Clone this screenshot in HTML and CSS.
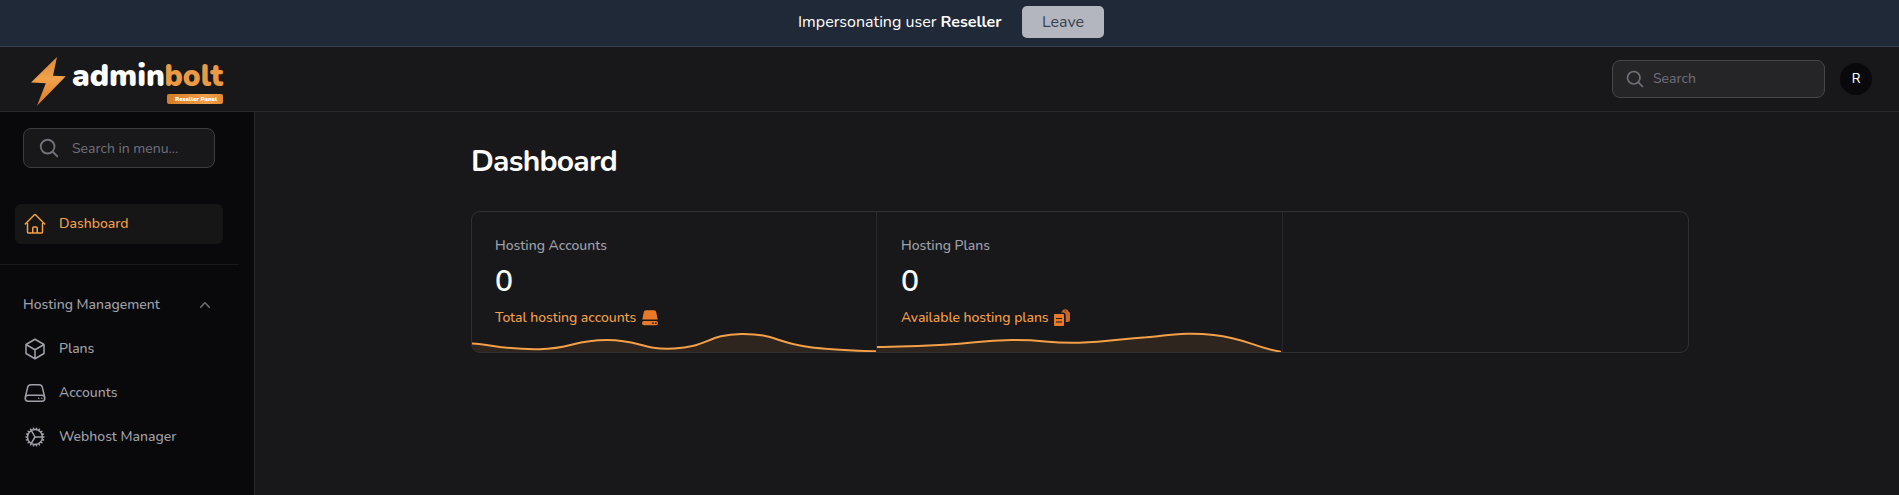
FILE: index.html
```html
<!DOCTYPE html>
<html lang="en">
<head>
<meta charset="utf-8">
<title>Dashboard</title>
<link rel="stylesheet" href="styles.css">
</head>
<body>
<div class="banner"><span class="banner-text">Impersonating user <b>Reseller</b></span><button class="leave">Leave</button></div>
<header class="topbar">
  <svg class="logo" width="200" height="64" viewBox="28 47 200 64">
    <defs>
      <linearGradient id="boltFill" x1="0" y1="0" x2="0" y2="1"><stop offset="0" stop-color="#d98a3a"/><stop offset=".45" stop-color="#f2a24c"/><stop offset="1" stop-color="#d67a20"/></linearGradient>
      <linearGradient id="tagFill" x1="0" y1="0" x2="1" y2="0"><stop offset="0" stop-color="#d67d24"/><stop offset=".7" stop-color="#f2a04a"/><stop offset="1" stop-color="#e28a32"/></linearGradient>
    </defs>
    <path d="M57 57 53 75.8 65.8 76.3 37 105.8 45.800 83.200 31 82.400Z" fill="url(#boltFill)"/>
    <text class="word" x="72" y="85.800" textLength="93" lengthAdjust="spacingAndGlyphs" fill="#fff">admin</text>
    <text class="word" x="164.500" y="85.800" textLength="58.500" lengthAdjust="spacingAndGlyphs" fill="#ea9a45">bolt</text>
    <rect x="167" y="94" width="56" height="10" rx="2" fill="url(#tagFill)"/>
    <text class="tag" x="175" y="101.200" textLength="42" lengthAdjust="spacingAndGlyphs" fill="#fff">Reseller Panel</text>
  </svg>
  <div class="tools">
    <div class="search"><svg class="i20" viewBox="0 0 24 24"><path d="m21 21-5.197-5.197m0 0A7.5 7.5 0 1 0 5.196 5.196a7.5 7.5 0 0 0 10.607 10.607Z"/></svg><span>Search</span></div>
    <div class="avatar">R</div>
  </div>
</header>
<div class="shell">
  <aside class="sidebar">
    <div class="search menu-search"><svg class="i22" viewBox="0 0 24 24"><path d="m21 21-5.197-5.197m0 0A7.5 7.5 0 1 0 5.196 5.196a7.5 7.5 0 0 0 10.607 10.607Z"/></svg><span>Search in menu...</span></div>
    <a class="nav active"><svg class="i24" viewBox="0 0 24 24"><path d="m2.25 12 8.954-8.955c.44-.439 1.152-.439 1.591 0L21.75 12M4.5 9.75v10.125c0 .621.504 1.125 1.125 1.125H9.75v-4.875c0-.621.504-1.125 1.125-1.125h2.25c.621 0 1.125.504 1.125 1.125V21h4.125c.621 0 1.125-.504 1.125-1.125V9.75M8.25 21h8.25"/></svg><span>Dashboard</span></a>
    <div class="rule"></div>
    <div class="group"><span>Hosting Management</span><svg class="chev" viewBox="0 0 20 20"><path d="M14.77 12.79a.75.75 0 0 1-1.06-.02L10 8.832 6.29 12.77a.75.75 0 1 1-1.08-1.04l4.25-4.5a.75.75 0 0 1 1.08 0l4.25 4.5a.75.75 0 0 1-.02 1.06Z"/></svg></div>
    <nav class="items">
      <a class="nav"><svg class="i24" viewBox="0 0 24 24"><path d="m21 7.5-9-5.25L3 7.5m18 0-9 5.25m9-5.25v9l-9 5.25M3 7.5l9 5.25M3 7.5v9l9 5.25m0-9v9"/></svg><span>Plans</span></a>
      <a class="nav"><svg class="i24" viewBox="0 0 24 24"><path d="M21.75 17.25v-.228a4.5 4.5 0 0 0-.12-1.03l-2.268-9.64a3.375 3.375 0 0 0-3.285-2.602H7.923a3.375 3.375 0 0 0-3.285 2.602l-2.268 9.64a4.5 4.5 0 0 0-.12 1.03v.228m19.5 0a3 3 0 0 1-3 3H5.25a3 3 0 0 1-3-3m19.5 0a3 3 0 0 0-3-3H5.25a3 3 0 0 0-3 3m16.5 0h.008v.008h-.008v-.008Zm-3 0h.008v.008h-.008v-.008Z"/></svg><span>Accounts</span></a>
      <a class="nav"><svg class="i24" viewBox="0 0 24 24"><path d="M4.5 12a7.5 7.5 0 0 0 15 0m-15 0a7.5 7.5 0 1 1 15 0m-15 0H3m16.5 0H21m-1.5 0H12m-8.457 3.077 1.41-.513m14.095-5.13 1.41-.513M5.106 17.785l1.15-.964m11.49-9.642 1.149-.964M7.501 19.795l.75-1.3m7.5-12.99.75-1.3m-6.063 16.658.26-1.477m2.605-14.772.26-1.477m0 17.726-.26-1.477M10.698 4.614l-.26-1.477M16.5 19.794l-.75-1.299M7.5 4.205 12 12m6.894 5.785-1.149-.964M6.256 7.178l-1.15-.964m15.352 8.864-1.41-.513M4.954 9.435l-1.41-.514M12.002 12l-3.75 6.495"/></svg><span>Webhost Manager</span></a>
    </nav>
  </aside>
  <main class="main">
    <h1>Dashboard</h1>
    <section class="stats">
      <div class="stat">
        <div class="label">Hosting Accounts</div>
        <div class="value">0</div>
        <div class="desc"><span class="w-total">Total hosting accounts</span><svg viewBox="0 0 20 20"><path d="M6 2.200h8c1.100 0 1.900.7 2.200 1.800l1.500 7.500H2.300L3.800 4C4.100 2.900 4.900 2.200 6 2.200Z"/><path fill-rule="evenodd" d="M4 13h12a2 2 0 0 1 2 2v.2a2 2 0 0 1-2 2H4a2 2 0 0 1-2-2V15a2 2 0 0 1 2-2Zm8.900 1.200a.9.9 0 1 0 0 1.800.9.9 0 0 0 0-1.800Zm2.900 0a.9.9 0 1 0 0 1.800.9.9 0 0 0 0-1.800Z"/></svg></div>
        <svg class="chart" viewBox="0 0 404 20" preserveAspectRatio="none"><path class="area" d="M0 11.5C20 12.5 33.7 17.9 67.3 17.2S101 8.1 134.7 8 168.3 18 202 16.5 235.6 2.4 269.3 2 303 10.6 336.7 15C358 18 380 18.6 404 19.5V20H0Z"/><path class="line" d="M0 11.5C20 12.5 33.7 17.9 67.3 17.2S101 8.1 134.7 8 168.3 18 202 16.5 235.6 2.4 269.3 2 303 10.6 336.7 15C358 18 380 18.6 404 19.3"/></svg>
      </div>
      <div class="stat second">
        <div class="label">Hosting Plans</div>
        <div class="value">0</div>
        <div class="desc"><span class="w-avail">Available hosting plans</span><svg viewBox="0 0 20 20"><path fill-rule="evenodd" d="M3 6h8.2c.5 0 .8.3.8.8v10.400c0 .5-.3.8-.8.8H3c-.6 0-1-.4-1-1V7c0-.6.4-1 1-1Zm1 4v1h6v-1H4Zm0 3.400v1h6v-1H4Z"/><path d="M9 4.500h2c1.600 0 2.700 1 2.700 2.600V14H16a2 2 0 0 0 2-2V5.500c0-1-.7-1.800-1.700-2C16 2 14.900 1.200 13.300 1.200S10.500 2 10.200 3.400C9.700 3.500 9.300 4 9 4.500Zm3.200-1.300c.2-.5.500-.7 1.100-.7s1 .2 1.200.7Z" fill-rule="evenodd" fill-opacity=".85"/></svg></div>
        <svg class="chart" viewBox="0 0 404 20" preserveAspectRatio="none"><path class="area" d="M0 15C22 14.400 33.700 14.400 67.300 12.700S101 8.500 134.700 8 168.300 11.400 202 10.700 235.700 7.300 269.300 5.300C303 2 313 .5 336.700 2.900 370 6.300 376 15.500 404 19.700V20H0Z"/><path class="line" d="M0 15C22 14.400 33.700 14.400 67.300 12.700S101 8.500 134.700 8 168.300 11.400 202 10.700 235.700 7.300 269.300 5.300C303 2 313 .5 336.700 2.900 370 6.300 376 15.500 404 19.700"/></svg>
      </div>
      <div class="stat"></div>
    </section>
  </main>
</div>
</body>
</html>
```
FILE: styles.css
```css
* { box-sizing: border-box; }
body { margin: 0; height: 495px; overflow: hidden; display: flex; flex-direction: column; background: #18181b; color: #fff; font: 500 14px/20px Nunito, Lato, sans-serif; }
svg { display: block; flex: none; }
span, .label { white-space: nowrap; }
.banner { height: 47px; flex: none; background: #1f2937; border-bottom: 1px solid #374151; display: flex; align-items: flex-start; padding: 6px 0 0 798px; gap: 20px; }
.banner-text { font-size: 16px; font-weight: 400; line-height: 32px; width: 204px; }
.leave { width: 82px; height: 32px; border: 0; border-radius: 5px; background: #b3b6be; color: #374151; font: 400 16px/32px Nunito, Lato, sans-serif; padding: 0; }
.topbar { height: 65px; flex: none; border-bottom: 1px solid #2a2a2d; display: flex; justify-content: space-between; padding: 0 27px 0 28px; }
.word { font: 900 32.500px Nunito, Lato, sans-serif; }
.tag { font: 900 6.500px Nunito, Lato, sans-serif; }
.tools { display: flex; align-items: center; gap: 15px; }
.search { width: 213px; height: 38px; border: 1px solid #464649; border-radius: 8px; background: #252528; color: #71717a; display: flex; align-items: center; padding-left: 12px; gap: 8px; font-weight: 400; }
.search svg, .nav svg { fill: none; stroke: currentColor; stroke-width: 1.500; stroke-linecap: round; stroke-linejoin: round; }
.search svg { stroke-width: 2; }
.i20 { width: 20px; height: 20px; }
.i22 { width: 22px; height: 22px; }
.i24 { width: 24px; height: 24px; }
.avatar { width: 32px; height: 32px; border-radius: 50%; background: #09090b; text-align: center; line-height: 32px; font-size: 13px; }
.shell { flex: 1; display: flex; min-height: 0; }
.sidebar { width: 255px; flex: none; background: #09090b; border-right: 1px solid #29292c; padding-top: 16px; color: #a1a1aa; }
.menu-search { width: 192px; height: 40px; margin-left: 23px; background: #18181b; border-color: #3d3d40; padding-left: 14px; gap: 12px; }
.menu-search span { padding-top: 2px; }
.nav { height: 40px; display: flex; align-items: center; gap: 12px; margin-left: 15px; width: 208px; padding-left: 8px; border-radius: 6px; }
.active { margin-top: 36px; background: #161616; color: #f3a048; }
.rule { width: 239px; height: 1px; background: #19191b; margin-top: 20px; }
.group { margin: 30px 0 0 23px; width: 192px; display: flex; justify-content: space-between; align-items: center; }
.chev { width: 20px; height: 20px; fill: #71717a; }
.items { display: grid; gap: 4px; margin-top: 14px; }
.main { flex: 1; padding: 32px 0 0 216px; }
h1 { margin: 0; font-size: 30px; line-height: 36px; font-weight: 700; letter-spacing: -.75px; }
.stats { width: 1218px; height: 142px; margin-top: 31px; border: 1px solid #303033; border-radius: 9px; display: grid; grid-template-columns: 405px 406px 405px; overflow: hidden; }
.stat { border-right: 1px solid #29292c; padding: 24px 0 0; display: flex; flex-direction: column; }
.stat:last-child { border: 0; }
.label, .value, .desc { padding-left: 23px; }
.second .label, .second .value, .second .desc { padding-left: 24px; }
.label { color: #a1a1aa; }
.value { font-size: 30px; line-height: 36px; font-weight: 600; letter-spacing: -.75px; margin-top: 8px; }
.desc { display: flex; align-items: center; gap: 4px; color: #f3a048; margin-top: 8px; }
.desc svg { width: 20px; height: 20px; fill: #ea7829; }
.stat .chart { width: 404px; height: 20px; margin-top: auto; }
.area { fill: #f3a048; fill-opacity: .1; }
.line { fill: none; stroke: #f3a048; stroke-width: 2; }
.w-total { width: 141px; letter-spacing: -.04px; }
.w-avail { width: 147px; letter-spacing: -.04px; }
```
